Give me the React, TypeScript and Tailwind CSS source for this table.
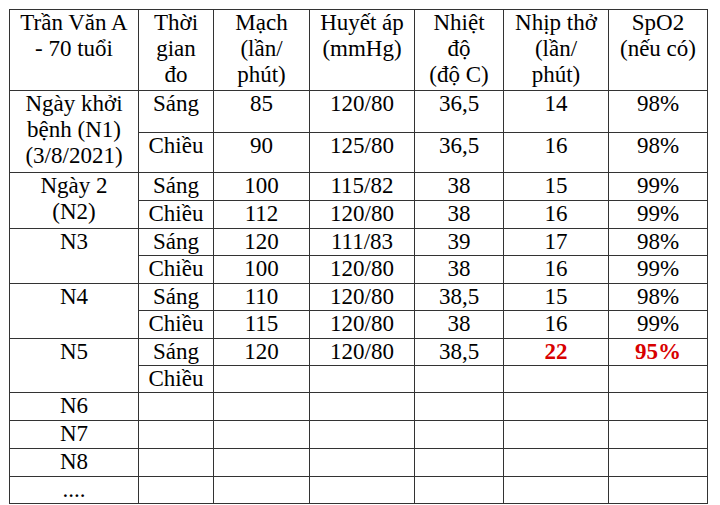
import React from 'react';

type Row = {
  day?: React.ReactNode;
  daySpan?: number;
  time: string;
  pulse: string;
  bp: string;
  temp: string;
  resp: string;
  spo2: string;
  h: string;
  alert?: boolean;
};

const rows: Row[] = [
  { day: <>Ngày khởi<br />bệnh (N1)<br />(3/8/2021)</>, daySpan: 2, time: 'Sáng', pulse: '85', bp: '120/80', temp: '36,5', resp: '14', spo2: '98%', h: 'h-[42px]' },
  { time: 'Chiều', pulse: '90', bp: '125/80', temp: '36,5', resp: '16', spo2: '98%', h: 'h-[40px]' },
  { day: <>Ngày 2<br />(N2)</>, daySpan: 2, time: 'Sáng', pulse: '100', bp: '115/82', temp: '38', resp: '15', spo2: '99%', h: 'h-[28px]' },
  { time: 'Chiều', pulse: '112', bp: '120/80', temp: '38', resp: '16', spo2: '99%', h: 'h-[28px]' },
  { day: 'N3', daySpan: 2, time: 'Sáng', pulse: '120', bp: '111/83', temp: '39', resp: '17', spo2: '98%', h: 'h-[27px]' },
  { time: 'Chiều', pulse: '100', bp: '120/80', temp: '38', resp: '16', spo2: '99%', h: 'h-[28px]' },
  { day: 'N4', daySpan: 2, time: 'Sáng', pulse: '110', bp: '120/80', temp: '38,5', resp: '15', spo2: '98%', h: 'h-[27px]' },
  { time: 'Chiều', pulse: '115', bp: '120/80', temp: '38', resp: '16', spo2: '99%', h: 'h-[28px]' },
  { day: 'N5', daySpan: 2, time: 'Sáng', pulse: '120', bp: '120/80', temp: '38,5', resp: '22', spo2: '95%', h: 'h-[27px]', alert: true },
  { time: 'Chiều', pulse: '', bp: '', temp: '', resp: '', spo2: '', h: 'h-[27px]' },
  { day: 'N6', daySpan: 1, time: '', pulse: '', bp: '', temp: '', resp: '', spo2: '', h: 'h-[28px]' },
  { day: 'N7', daySpan: 1, time: '', pulse: '', bp: '', temp: '', resp: '', spo2: '', h: 'h-[28px]' },
  { day: 'N8', daySpan: 1, time: '', pulse: '', bp: '', temp: '', resp: '', spo2: '', h: 'h-[28px]' },
  { day: '....', daySpan: 1, time: '', pulse: '', bp: '', temp: '', resp: '', spo2: '', h: 'h-[27px]' },
];

const serif = { fontFamily: 'Tinos, "Liberation Serif", "Times New Roman", serif' };

function Cell({ children, span, alert }: { children?: React.ReactNode; span?: number; alert?: boolean }) {
  const cls = alert
    ? 'border border-[#333] p-0 align-top text-center text-[#d80000] font-bold'
    : 'border border-[#333] p-0 align-top text-center';
  return (
    <td className={cls} rowSpan={span}>
      <span style={serif}>{children}</span>
    </td>
  );
}

export default function App() {
  return (
    <div className="w-[720px] bg-white pl-[9px] pt-[9px] text-[23px] leading-[26px]" style={serif}>
      <table className="table-fixed border-collapse border border-[#333] w-[698px]">
        <colgroup>
          <col className="w-[129px]" />
          <col className="w-[75px]" />
          <col className="w-[96px]" />
          <col className="w-[105px]" />
          <col className="w-[89px]" />
          <col className="w-[105px]" />
          <col className="w-[99px]" />
        </colgroup>
        <tbody>
          <tr className="h-[81px]">
            <Cell>Trần Văn A<br />- 70 tuổi</Cell>
            <Cell>Thời<br />gian<br />đo</Cell>
            <Cell>Mạch<br />(lần/<br />phút)</Cell>
            <Cell>Huyết áp<br />(mmHg)</Cell>
            <Cell>Nhiệt<br />độ<br />(độ C)</Cell>
            <Cell>Nhịp thở<br />(lần/<br />phút)</Cell>
            <Cell>SpO2<br />(nếu có)</Cell>
          </tr>
          {rows.map((r, i) => (
            <tr key={i} className={r.h}>
              {r.day !== undefined && <Cell span={r.daySpan}>{r.day}</Cell>}
              <Cell>{r.time}</Cell>
              <Cell>{r.pulse}</Cell>
              <Cell>{r.bp}</Cell>
              <Cell>{r.temp}</Cell>
              <Cell alert={r.alert}>{r.resp}</Cell>
              <Cell alert={r.alert}>{r.spo2}</Cell>
            </tr>
          ))}
        </tbody>
      </table>
    </div>
  );
}
